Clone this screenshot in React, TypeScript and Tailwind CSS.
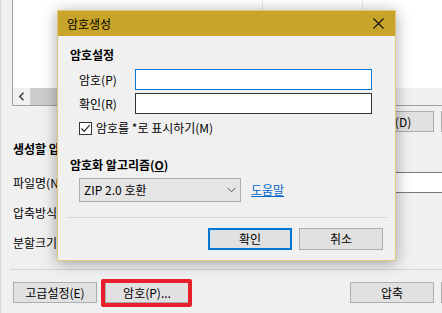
import React from "react"

const font = "font-['Noto_Sans_CJK_KR','Liberation_Sans',sans-serif]"

function WinButton({ label, className = "" }: { label: string; className?: string }) {
  return (
    <div
      className={`h-[21px] shrink-0 bg-[#e1e1e1] border border-[#adadad] flex items-center justify-center text-[12px] leading-none text-black ${className}`}
    >
      {label}
    </div>
  )
}

function PasswordDialog() {
  return (
    <div className="absolute left-[56px] top-[10px] w-[339px] h-[251px] bg-[#f0f0f0] border border-[#e3c77a] shadow-[0_2px_14px_rgba(0,0,0,0.35)] flex flex-col">
      <div className="h-[25px] bg-[#c9a42b] flex items-center justify-between pl-[9px] pr-[10px]">
        <span className="text-[12px] leading-none text-black">암호생성</span>
        <svg width="11" height="11" viewBox="0 0 11 11" className="mr-[1px]">
          <path d="M0.5 0.5 L10.5 10.5 M10.5 0.5 L0.5 10.5" stroke="#111" strokeWidth="1.1" fill="none" />
        </svg>
      </div>

      <div className="flex flex-col pl-[12px]">
        <div className="mt-[11px] h-[16px] flex items-center text-[12px] font-bold leading-none">암호설정</div>

        <div className="mt-[6px] flex items-center h-[21px] pl-[9px]">
          <span className="w-[56px] text-[12px] leading-none">암호(P)</span>
          <div className="w-[237px] h-[21px] bg-white border border-[#0078d7]" />
        </div>
        <div className="mt-[3px] flex items-center h-[21px] pl-[9px]">
          <span className="w-[56px] text-[12px] leading-none">확인(R)</span>
          <div className="w-[237px] h-[21px] bg-white border border-[#333333]" />
        </div>

        <div className="mt-[7px] flex items-center h-[14px] pl-[9px] gap-[4px]">
          <div className="w-[13px] h-[13px] border border-[#333] bg-white flex items-center justify-center">
            <svg width="11" height="11" viewBox="0 0 11 11">
              <path d="M1.5 5.5 L4.2 8.3 L9.6 2.2" stroke="#222" strokeWidth="1.2" fill="none" />
            </svg>
          </div>
          <span className="text-[12px] leading-none">암호를 *로 표시하기(M)</span>
        </div>

        <div className="mt-[22px] h-[16px] flex items-center text-[12px] font-bold leading-none">
          암호화 알고리즘(<span className="underline">O</span>)
        </div>

        <div className="mt-[5px] flex items-center pl-[9px]">
          <div className="w-[162px] h-[24px] bg-[#e5e5e5] border border-[#acacac] flex items-center justify-between pl-[4px] pr-[4px]">
            <span className="text-[12px] leading-none">ZIP 2.0 호환</span>
            <svg width="9" height="6" viewBox="0 0 9 6">
              <path d="M0.5 0.8 L4.5 4.8 L8.5 0.8" stroke="#555" strokeWidth="1" fill="none" />
            </svg>
          </div>
          <span className="ml-[10px] text-[12px] leading-none text-[#0066cc] underline">도움말</span>
        </div>

        <div className="mt-[15px] mr-[8px] ml-[-3px] border-t border-[#d5d5d5]" />

        <div className="mt-[10px] flex justify-end gap-[7px] pr-[12px]">
          <div className="w-[84px] h-[22px] bg-[#e1e1e1] border-2 border-[#0078d7] flex items-center justify-center text-[12px] leading-none">
            확인
          </div>
          <WinButton label="취소" className="w-[84px] h-[22px]" />
        </div>
      </div>
    </div>
  )
}

export default function App() {
  return (
    <div className={`relative w-[442px] h-[313px] overflow-hidden bg-[#f0f0f0] text-black border-l border-[#d8d8d8] ${font}`}>
      {/* file list */}
      <div className="ml-[11px] h-[106px] border-l border-b border-[#a0a0a0] flex flex-col">
        <div className="h-[88px] bg-white flex">
          <div className="w-[250px] border-r border-[#e3eaf3]" />
          <div className="w-[100px] border-r border-[#e3eaf3]" />
        </div>
        <div className="h-[17px] flex bg-[#f0f0f0]">
          <div className="w-[17px] flex items-center justify-center">
            <svg width="7" height="9" viewBox="0 0 7 9">
              <path d="M5.5 0.8 L1.8 4.5 L5.5 8.2" stroke="#444" strokeWidth="1.6" fill="none" />
            </svg>
          </div>
          <div className="w-[280px] bg-[#cdcdcd]" />
        </div>
      </div>

      <div className="mt-[5px] flex gap-[7px] pl-[349px]">
        <WinButton label="삭제(D)" className="w-[84px]" />
        <WinButton label="" className="w-[84px]" />
      </div>

      <div className="mt-[9px] pl-[12px] h-[16px] flex items-center text-[12px] font-bold leading-none">
        생성할 압축파일
      </div>

      <div className="mt-[15px] flex items-center h-[21px] pl-[12px]">
        <span className="w-[100px] text-[12px] leading-none">파일명(N)</span>
        <div className="flex-1 h-[21px] bg-white border-y border-[#7a7a7a]" />
      </div>
      <div className="mt-[9px] flex items-center h-[21px] pl-[12px]">
        <span className="text-[12px] leading-none">압축방식</span>
      </div>
      <div className="mt-[9px] flex items-center h-[21px] pl-[12px]">
        <span className="text-[12px] leading-none">분할크기</span>
      </div>

      <div className="mt-[16px] ml-[9px] border-t border-[#d5d5d5]" />

      <div className="mt-[12px] flex pl-[12px]">
        <WinButton label="고급설정(E)" className="w-[84px]" />
        <WinButton label="암호(P)..." className="w-[84px] ml-[8px]" />
        <WinButton label="압축" className="w-[84px] ml-[161px]" />
        <WinButton label="" className="w-[84px] ml-[7px]" />
      </div>

      {/* highlight box around the 암호 button */}
      <div className="absolute left-[100px] top-[279px] w-[91px] h-[28px] border-[4px] border-[#e5202a] rounded-[2px]" />

      <PasswordDialog />
    </div>
  )
}
